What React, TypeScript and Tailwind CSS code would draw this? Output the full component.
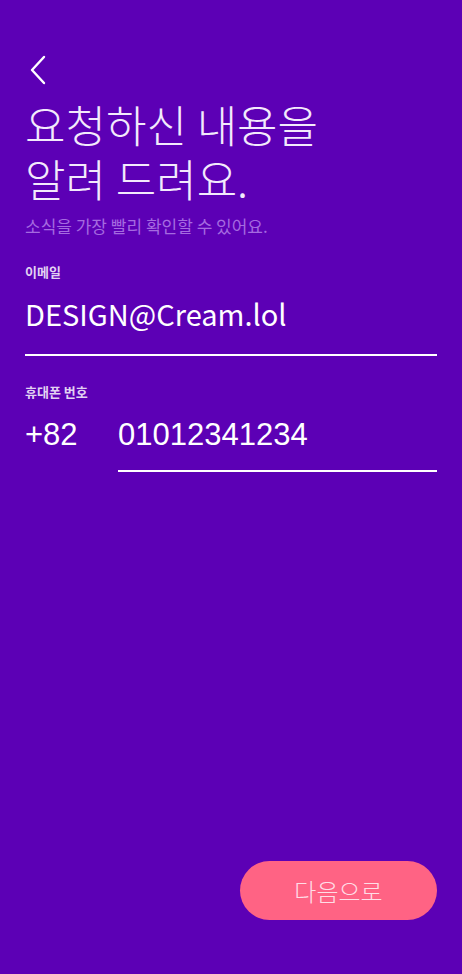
import React from 'react';

const font = {
  fontFamily: '"Noto Sans CJK KR", "Noto Sans", sans-serif',
};

const light = {
  fontFamily:
    '"Noto Sans CJK KR Light", "Noto Sans CJK KR DemiLight", "Noto Sans CJK KR", sans-serif',
};

const arial = {
  fontFamily: '"Liberation Sans", Arial, sans-serif',
};

export default function App() {
  return (
    <div
      className="w-[462px] h-[974px] bg-[#5c00b5] text-white flex flex-col px-[25px]"
      style={font}
    >
      {/* back */}
      <div className="pt-[55px] pl-[3px]">
        <svg width="20" height="30" viewBox="0 0 20 30" fill="none">
          <path d="M16 2 L4 15 L16 28" stroke="white" strokeWidth="2.4" strokeLinecap="round" strokeLinejoin="round" />
        </svg>
      </div>

      <h1
        className="mt-[12px] text-[44px] leading-[54px] font-extralight text-[#f3eafc]"
        style={light}
      >
        요청하신 내용을
        <br />
        알려 드려요.
      </h1>
      <p className="mt-[9px] text-[17px] leading-[24px] text-[#a56ae0]">
        소식을 가장 빨리 확인할 수 있어요.
      </p>

      <label className="mt-[25px] text-[13px] leading-[18px] font-bold text-[#e2d2f2]">이메일</label>
      <div className="mt-[12px] text-[29px] leading-[40px] pb-[21px] border-b-2 border-white text-white">
        DESIGN@Cream.lol
      </div>

      <label className="mt-[27px] text-[13px] leading-[18px] font-bold text-[#e2d2f2]">휴대폰 번호</label>
      <div className="mt-[14px] flex" style={arial}>
        <div className="w-[93px] text-[31px] leading-[40px]">+82</div>
        <div className="flex-1 text-[31px] leading-[40px] pb-[15px] border-b-2 border-white">01012341234</div>
      </div>

      <div className="flex-1" />
      <div className="flex justify-end pb-[54px]">
        <button
          className="w-[197px] h-[59px] rounded-full bg-[#ff6384] text-[24px] font-light text-[#ffdde6]"
          style={light}
        >
          다음으로
        </button>
      </div>
    </div>
  );
}
